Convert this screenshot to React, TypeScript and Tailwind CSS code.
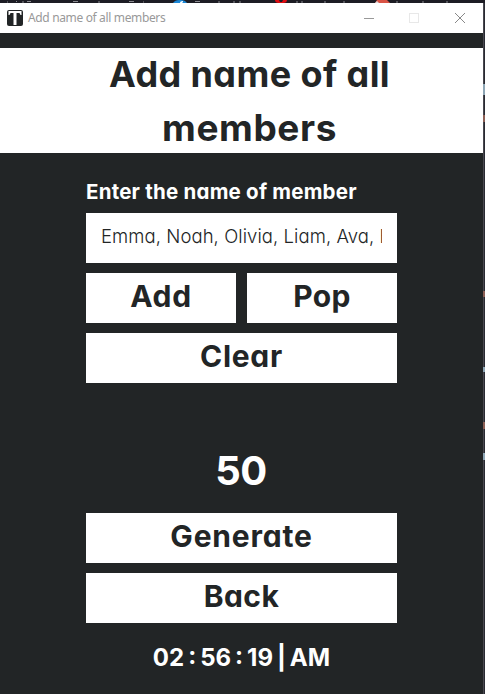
import type { ReactNode } from "react";

function ActionButton({ children, className = "" }: { children: ReactNode; className?: string }) {
  return (
    <button
      className={`flex h-[50px] items-center justify-center bg-white pb-[4px] text-[30px] leading-none font-bold whitespace-nowrap text-[#222526] ${className}`}
    >
      {children}
    </button>
  );
}

function TitleBar() {
  return (
    <header className="flex h-[30px] items-center bg-white pb-px pl-[7px] text-[#999999]">
      <svg width="16" height="16" viewBox="0 0 16 16" className="shrink-0">
        <rect width="16" height="16" rx="2" fill="#222526" />
        <path d="M1.5 1h13v4h-1l-1-2H9.5v12h-3V3H3.5l-1 2h-1z" fill="#fff" />
      </svg>
      <span className="ml-[5px] font-['Noto_Sans',sans-serif] text-[12px] leading-none tracking-[-0.35px] whitespace-nowrap">
        Add name of all members
      </span>
      <svg width="106" height="12" viewBox="0 0 106 12" fill="none" className="mr-[16px] ml-auto" shapeRendering="crispEdges">
        <path d="M3 6.5h10" stroke="#999" />
        <path d="M48.5 1.5h9v9h-9z" stroke="#e8e8e8" />
        <path d="M94 1l10 10M104 1L94 11" stroke="#888" shapeRendering="auto" />
      </svg>
    </header>
  );
}

function DesktopTop() {
  return (
    <svg width="485" height="3" viewBox="0 0 485 3" className="shrink-0">
      <rect width="485" height="3" fill="#1d1c24" />
      <path
        d="M7 2h1M16 1.5h1M23 1v2M27 1.5h4M73 1.5h5M99 1v2M129 1.5h5M143 2h1M195 1.5h5M219 1v2M234 1v2M240 1v2M297 1v2M302 1v2M324 2h2M344 1v2M397 1v2M422 2h2M447 1v2"
        stroke="#8b8b91"
      />
      <path d="M173 3q2-3 6-3h2q4 0 6 3z" fill="#1b87d6" />
      <path d="M180 3q0-2 3-2v1l-1 1z" fill="#fff" />
      <path d="M275 0h4l1 2h2l1-2h4q0 3-4 3h-4q-4 0-4-3z" fill="#e00b10" />
      <path d="M375 3l2-3h10l3 3z" fill="#d95345" />
      <path d="M375 3l2-2 2 2z" fill="#ddd" />
    </svg>
  );
}

function DesktopEdge() {
  return (
    <svg width="2" height="691" viewBox="0 0 2 691" className="shrink-0">
      <path d="M.5 0v691" stroke="#49484f" />
      <path d="M1.5 0v691" stroke="#292a32" />
      <path d="M1 81v11M1 364v5M1 450v7" stroke="#8ea6b5" strokeWidth="2" />
      <path d="M1 112v7M1 288v6M1 419v7" stroke="#8c5f55" strokeWidth="2" />
    </svg>
  );
}

export default function App() {
  return (
    <div className="flex h-[694px] w-[485px] flex-col overflow-hidden bg-[#222526] font-['Inter',sans-serif] [font-feature-settings:'cv11']">
      <DesktopTop />
      <div className="flex min-h-0 flex-1">
        <div className="flex w-[483px] flex-col">
          <TitleBar />
          <h1 className="mt-[15px] h-[105px] bg-white pl-[16px] text-center text-[36px] leading-[53px] font-bold text-[#222526]">
            <span className="block tracking-[0.4px]">Add name of all</span>
            <span className="block text-[37px] tracking-[0.6px]">members</span>
          </h1>
          <main className="mx-[86px] flex w-[311px] flex-col">
            <label className="mt-[27px] h-[33px] text-[20.5px] leading-[24px] font-bold tracking-[0.22px] whitespace-nowrap text-white">
              Enter the name of member
            </label>
            <input
              className="h-[50px] w-full bg-white px-[15px] pb-[4px] text-[18.5px] font-[350] tracking-[0.07px] text-[#222526] outline-none"
              defaultValue="Emma, Noah, Olivia, Liam, Ava, Ethan"
            />
            <div className="mt-[10px] grid grid-cols-2 gap-[11px]">
              <ActionButton className="tracking-[0.7px]">Add</ActionButton>
              <ActionButton className="tracking-[0.4px]">Pop</ActionButton>
            </div>
            <ActionButton className="mt-[10px] tracking-[0.7px]">Clear</ActionButton>
            <div className="mt-[63px] h-[67px] pr-px text-center text-[40px] leading-[50px] font-bold tracking-[-0.6px] text-white">
              50
            </div>
            <ActionButton className="tracking-[0.8px]">Generate</ActionButton>
            <ActionButton className="mt-[10px] tracking-[0.4px]">Back</ActionButton>
            <div className="mt-[21px] text-center text-[24px] leading-[28px] font-bold [word-spacing:-1.7px] whitespace-nowrap text-white">
              02 : 56 : 19 | AM
            </div>
          </main>
        </div>
        <DesktopEdge />
      </div>
    </div>
  );
}
